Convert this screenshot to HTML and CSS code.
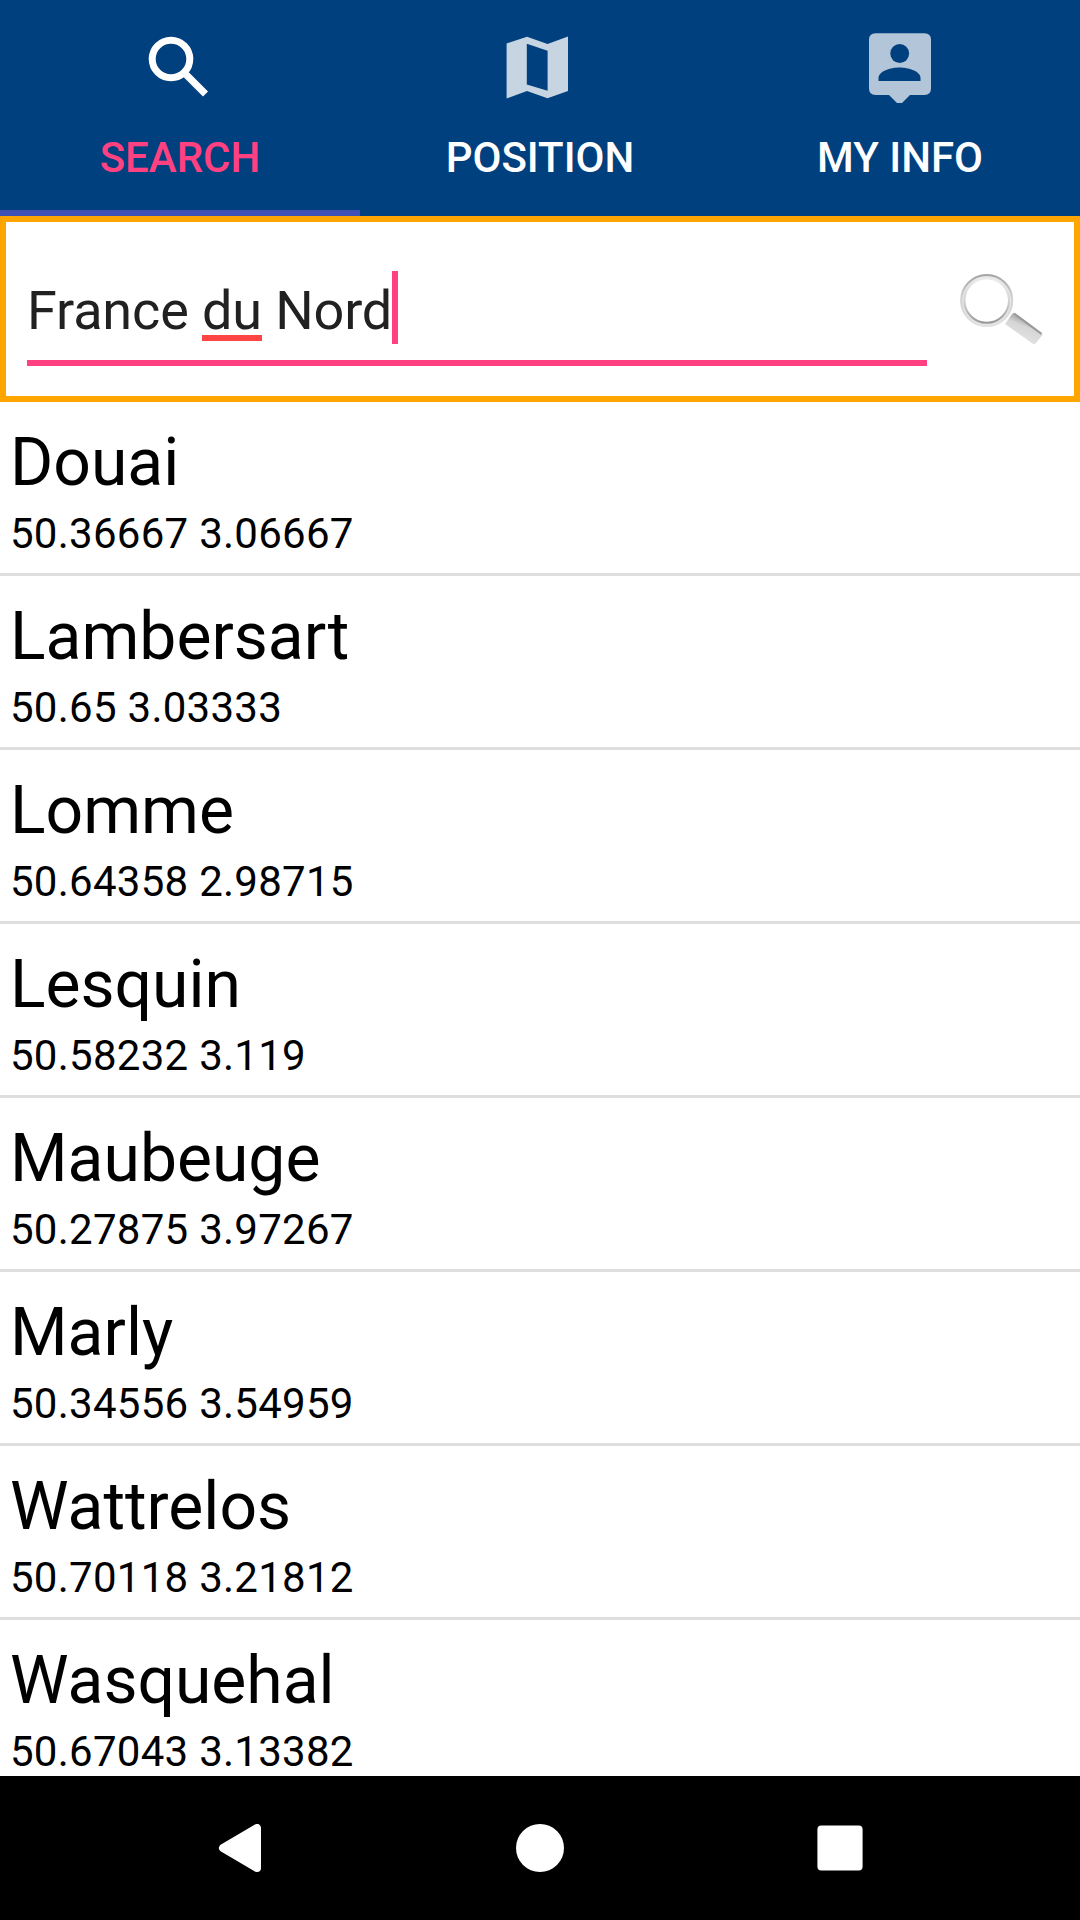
FILE: index.html
```
<!DOCTYPE html>
<html lang="en">
<head>
  <meta charset="UTF-8" />
  <meta name="viewport" content="width=device-width, initial-scale=1.0" />
  <title>City Search</title>
  <link rel="stylesheet" href="styles.css">
</head>
<body>
  <header class="tabs">
    <div class="tab active">
      <svg class="tab-icon" viewBox="0 0 96 96">
        <circle cx="39" cy="39" r="18.8" fill="none" stroke="#fff" stroke-width="7" />
        <path d="M54 54.5L73.5 74" stroke="#fff" stroke-width="7" />
      </svg>
      <span>SEARCH</span>
    </div>
    <div class="tab">
      <svg class="tab-icon" viewBox="0 0 96 96">
        <path fill="#c7d4e1" fill-rule="evenodd" d="M14.6 23.5L35 16.7L55.5 24L76 16.5V71L55.5 78.3L35 71L14.6 78.5ZM34.8 23.7V64.5L55.6 70.8V30.7Z" />
      </svg>
      <span>POSITION</span>
    </div>
    <div class="tab">
      <svg class="tab-icon" viewBox="0 0 96 96">
        <path fill="#b3c5d9" d="M23.5 13.2H72.5Q79 13.2 79 19.7V68.5Q79 75 72.5 75H58L50 83H45L37 75H23.5Q17 75 17 68.5V19.7Q17 13.2 23.5 13.2Z" />
        <circle cx="47.7" cy="33.5" r="9.4" fill="#01407f" />
        <path fill="#01407f" d="M26.5 61V58C26.5 51 39 47.5 47.5 47.5S68.5 51 68.5 58V61Z" />
      </svg>
      <span>MY INFO</span>
    </div>
  </header>

  <section class="search-box">
    <div class="search-input">France&nbsp;<span class="misspelled">du</span>&nbsp;Nord<span class="cursor"></span></div>
    <svg class="search-button" viewBox="0 0 96 96">
      <defs>
        <linearGradient id="rim" x1="0" y1="0" x2="0" y2="1">
          <stop offset="0" stop-color="#a5a5a5" />
          <stop offset="0.45" stop-color="#d2d2d2" />
          <stop offset="1" stop-color="#e2e2e2" />
        </linearGradient>
        <linearGradient id="rimInner" x1="0" y1="0" x2="0" y2="1">
          <stop offset="0" stop-color="#ececec" />
          <stop offset="0.5" stop-color="#d4d4d4" />
          <stop offset="1" stop-color="#989898" />
        </linearGradient>
        <linearGradient id="handle" x1="0.6" y1="0.3" x2="0.4" y2="0.7">
          <stop offset="0" stop-color="#b4b4b4" />
          <stop offset="0.35" stop-color="#d6d6d6" />
          <stop offset="1" stop-color="#dedede" />
        </linearGradient>
      </defs>
      <path fill="url(#handle)" d="M61 61L68 51Q69.500 49.300 71.500 50.500L97 69Q99 70.500 98 72.500L92 80Q90.500 81.500 88.500 80.500Z" />
      <path fill="none" stroke="#999" stroke-width="2" d="M70 50.500L97.500 71" />
      <circle cx="42.700" cy="37.500" r="24" fill="#fff" stroke="#e6e6e6" stroke-width="5" />
      <circle cx="42.700" cy="37.500" r="25.500" fill="none" stroke="url(#rim)" stroke-width="2" />
      <circle cx="42.700" cy="37.500" r="22.300" fill="none" stroke="url(#rimInner)" stroke-width="2" />
    </svg>
  </section>

  <main class="results">
    <div class="city"><h2>Douai</h2><p>50.36667 3.06667</p></div>
    <div class="city"><h2>Lambersart</h2><p>50.65 3.03333</p></div>
    <div class="city"><h2>Lomme</h2><p>50.64358 2.98715</p></div>
    <div class="city"><h2>Lesquin</h2><p>50.58232 3.119</p></div>
    <div class="city"><h2>Maubeuge</h2><p>50.27875 3.97267</p></div>
    <div class="city"><h2>Marly</h2><p>50.34556 3.54959</p></div>
    <div class="city"><h2>Wattrelos</h2><p>50.70118 3.21812</p></div>
    <div class="city"><h2>Wasquehal</h2><p>50.67043 3.13382</p></div>
  </main>

  <nav class="system-nav">
    <svg viewBox="0 0 48 48"><path fill="#fff" stroke="#fff" stroke-width="8" stroke-linejoin="round" d="M41 4V44L7 24Z" /></svg>
    <svg viewBox="0 0 48 48"><circle cx="24" cy="24" r="24" fill="#fff" /></svg>
    <svg viewBox="0 0 48 48"><rect x="1.400" y="1.400" width="45.200" height="45.200" rx="4" fill="#fff" /></svg>
  </nav>
</body>
</html>
```
FILE: styles.css
```
* {
  box-sizing: border-box;
}

body {
  margin: 0;
  height: 1920px;
  display: flex;
  flex-direction: column;
  overflow: hidden;
  font-family: Roboto, sans-serif;
  background-color: #fff;
  color: #000;
}

.tabs {
  display: grid;
  grid-template-columns: repeat(3, 1fr);
  height: 216px;
  background-color: #01407f;
}

.tab {
  display: flex;
  flex-direction: column;
  align-items: center;
  padding-top: 20px;
  border-bottom: 6px solid transparent;
  color: #fff;
  font-size: 42px;
  font-weight: 500;
  line-height: 50px;
}

.tab.active {
  color: #ff4081;
  border-bottom-color: #3f51b5;
}

.tab-icon {
  width: 96px;
  height: 96px;
  margin-bottom: 17px;
}

.search-box {
  display: flex;
  align-items: flex-start;
  height: 186px;
  padding: 41px 0 0 21px;
  border: 6px solid #ffa500;
}

.search-input {
  display: flex;
  align-items: center;
  width: 900px;
  height: 103px;
  padding-bottom: 1px;
  border-bottom: 6px solid #ff4081;
  color: #212121;
  font-size: 54px;
  line-height: 64px;
  letter-spacing: -0.14px;
}

.misspelled {
  height: 64px;
  background: linear-gradient(#ff4444, #ff4444) 0 56px / 100% 6px no-repeat;
}

.cursor {
  width: 6px;
  height: 73px;
  margin-bottom: 8px;
  background-color: #ff4081;
}

.search-button {
  width: 96px;
  height: 96px;
  margin-left: 17px;
  overflow: visible;
}

.results {
  flex: 1;
  min-height: 0;
  overflow: hidden;
}

.city {
  height: 174px;
  padding: 22px 10px 0;
  border-bottom: 3px solid #dedede;
}

.city h2 {
  margin: 0 0 7px;
  font-size: 66px;
  font-weight: 400;
  line-height: 78px;
}

.city p {
  margin: 0;
  font-size: 42px;
  line-height: 50px;
  letter-spacing: 0.27px;
}

.system-nav {
  display: grid;
  grid-template-columns: repeat(3, 1fr);
  place-items: center;
  height: 144px;
  padding: 0 90px;
  background-color: #000;
}

.system-nav svg {
  width: 48px;
  height: 48px;
}
```
